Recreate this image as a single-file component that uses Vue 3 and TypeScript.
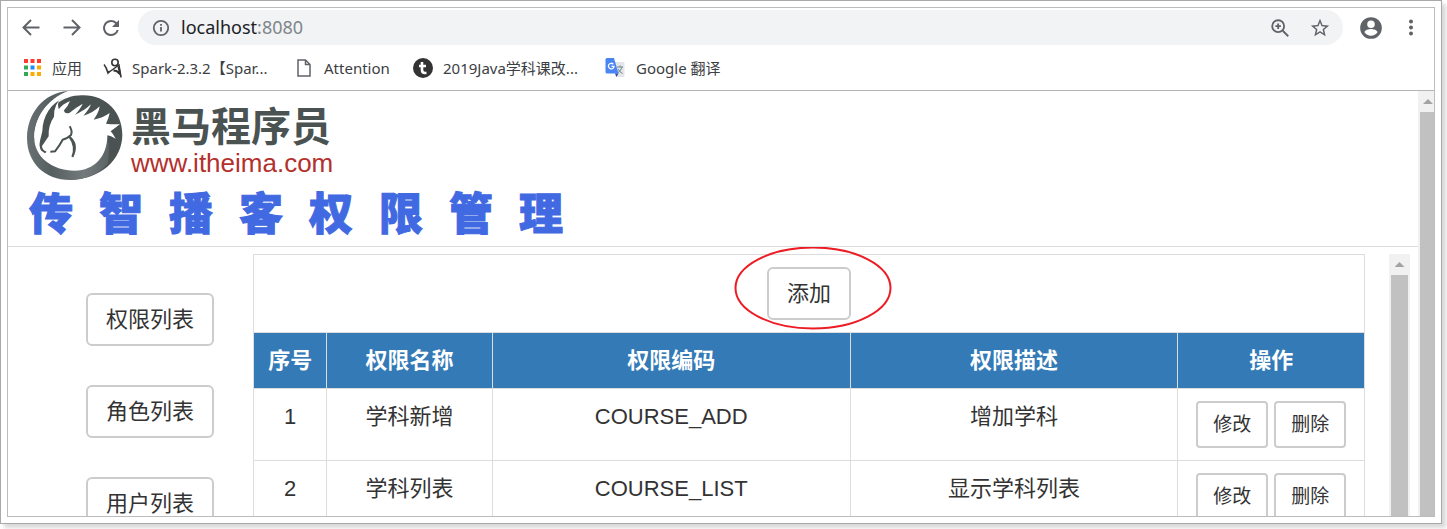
<script setup lang="ts">
interface Permission {
  id: number
  name: string
  code: string
  description: string
}

const title: string[] = [...'传智播客权限管理']
const menu: string[] = ['权限列表', '角色列表', '用户列表']
const headings: string[] = ['序号', '权限名称', '权限编码', '权限描述', '操作']
const permissions: Permission[] = [
  { id: 1, name: '学科新增', code: 'COURSE_ADD', description: '增加学科' },
  { id: 2, name: '学科列表', code: 'COURSE_LIST', description: '显示学科列表' },
]
const appColors: string[] = [
  '#ff3b30', '#ff3b30', '#ff3b30',
  '#34a853', '#1a8cff', '#fbab05',
  '#34a853', '#fbab05', '#fbab05',
]
</script>

<template>
  <div class="page">
    <div class="frame">
      <div class="browser">
        <header class="toolbar">
          <div class="nav-buttons">
            <button class="icon-button" aria-label="Back">
              <svg viewBox="0 0 24 24" width="24" height="24"><path d="M20.500 11.500H5M12 4l-7.500 7.500L12 19" class="line" /></svg>
            </button>
            <button class="icon-button" aria-label="Forward">
              <svg viewBox="0 0 24 24" width="24" height="24"><path d="M4.500 11.500H20M13 4l7.500 7.500L13 19" class="line" /></svg>
            </button>
            <button class="icon-button" aria-label="Reload">
              <svg viewBox="0 0 24 24" width="24" height="24" fill="#5f6368"><path d="M17.650 6.350A7.960 7.960 0 0 0 12 4a8 8 0 1 0 7.730 10h-2.080A6 6 0 1 1 12 6c1.660 0 3.140.69 4.220 1.780L13 11h7V4z" /></svg>
            </button>
          </div>
          <div class="address">
            <svg viewBox="0 0 20 20" width="18" height="18"><circle cx="10" cy="10" r="8" class="line" /><path d="M10 9v5M10 5.500v2" class="line" /></svg>
            <a class="url" href="#">localhost<span>:8080</span></a>
            <button class="icon-button" aria-label="Zoom">
              <svg viewBox="0 0 24 24" width="22" height="22"><circle cx="10" cy="10" r="6.500" class="line" /><path d="m15 15 6 6M10 7v6M7 10h6" class="line" /></svg>
            </button>
            <button class="icon-button star" aria-label="Bookmark">
              <svg viewBox="0 0 24 24" width="22" height="22" fill="#5f6368"><path d="m22 9.240-7.190-.62L12 2 9.190 8.630 2 9.240l5.460 4.730L5.820 21 12 17.270 18.180 21l-1.630-7.030zM12 15.400l-3.760 2.270 1-4.280-3.320-2.880 4.380-.38L12 6.100l1.710 4.040 4.380.38-3.320 2.880 1 4.280z" /></svg>
            </button>
          </div>
          <div class="menu-buttons">
            <button class="icon-button" aria-label="Account">
              <svg viewBox="0 0 24 24" width="26" height="26" fill="#5f6368"><path d="M12 2a10 10 0 1 0 0 20 10 10 0 0 0 0-20zm0 3a3.500 3.500 0 1 1 0 7 3.500 3.500 0 0 1 0-7zm0 14.200a7.200 7.200 0 0 1-6-3.220c.03-1.990 4-3.080 6-3.080s5.970 1.090 6 3.080a7.200 7.200 0 0 1-6 3.220z" /></svg>
            </button>
            <button class="icon-button" aria-label="Menu">
              <svg viewBox="0 0 24 24" width="24" height="24" fill="#5f6368"><circle cx="12" cy="5.500" r="2" /><circle cx="12" cy="11.500" r="2" /><circle cx="12" cy="17.500" r="2" /></svg>
            </button>
          </div>
        </header>

        <nav class="bookmarks">
          <a href="#" class="mark apps">
            <svg viewBox="0 0 17 17" width="17" height="17">
              <rect v-for="(color, i) in appColors" :key="i" :x="(i % 3) * 6.500" :y="Math.floor(i / 3) * 6.500" width="4" height="4" :fill="color" />
            </svg>
            <span>应用</span>
          </a>
          <a href="#" class="mark spark">
            <svg viewBox="0 0 20 20" width="20" height="20" fill="none" stroke="#333">
              <circle cx="12" cy="4.500" r="3.200" stroke-width="1.600" />
              <path d="M1 6.500q2.500 3 4 8.500l1.500-2" stroke-width="1.500" />
              <path d="M5.500 14.500 16 7l2 12.500" stroke-width="1.500" />
              <path d="M15.500 8.500 17 16l-3.500-3-3-.5" stroke-width="2" />
            </svg>
            <span>Spark-2.3.2【Spar...</span>
          </a>
          <a href="#" class="mark attention">
            <svg viewBox="0 0 14 18" width="14" height="18" fill="none" stroke="#5f6368" stroke-width="1.500"><path d="M1 1h7.500L13 5.500V17H1zM8.500 1v4.500H13" /></svg>
            <span>Attention</span>
          </a>
          <a href="#" class="mark course">
            <svg viewBox="0 0 20 20" width="20" height="20"><circle cx="10" cy="10" r="10" fill="#333" /><path d="M9 4v8q0 3 3 3h1.500M6 8h7" fill="none" stroke="#fff" stroke-width="2.600" /></svg>
            <span>2019Java学科课改...</span>
          </a>
          <a href="#" class="mark translate">
            <svg viewBox="0 0 20 20" width="20" height="20">
              <path d="M7 4h11q1.500 0 1.500 1.500v12q0 1.500-1.500 1.500h-7z" fill="#e3e5e8" />
              <path d="M12 9h6M15 7.500V9M17 9q-1 4-4.500 6M13 11q1.500 3 4.500 4.500" fill="none" stroke="#6f8790" />
              <path d="M2 0h7l4.500 15.500H2Q.5 15.500.5 14V1.500Q.5 0 2 0z" fill="#4a86f3" />
              <path d="M10 15.500h3.500L11.500 19z" fill="#3949ab" />
              <path d="M8.300 6.200A2.800 2.800 0 1 0 9 8.400H6.500" fill="none" stroke="#fff" stroke-width="1.300" />
            </svg>
            <span>Google 翻译</span>
          </a>
        </nav>

        <div class="viewport">
          <main class="site">
            <div class="banner">
              <div class="logo">
                <svg viewBox="21 9 288 270" width="96" height="90">
                  <defs>
                    <linearGradient id="rim" x1="0" y1="0" x2="1" y2="0">
                      <stop offset="0" stop-color="#687073" />
                      <stop offset=".3" stop-color="#565f60" />
                      <stop offset=".7" stop-color="#747a7c" />
                      <stop offset="1" stop-color="#5c6466" />
                    </linearGradient>
                  </defs>
                  <path d="M190 22C260 22 307 75 307 140C307 215 240 275 150 275C110 260 70 200 68 130C72 60 130 20 190 22Z" fill="#4a5352" />
                  <path d="M144 9C70 14 21 78 21 150C21 225 75 276 150 276C195 276 236 258 263 228C268 205 268 175 262 145L240 200L165 249L43 150C43 90 80 35 144 9Z" fill="url(#rim)" />
                  <path d="M144 10C80 35 43 90 43 150C43 205 95 248 165 248C222 248 262 207 262 142Q272 143 287 152Q279 137 272 130Q288 118 300 108Q280 110 258 107Q266 92 269 75Q248 90 221 95Q236 75 239 55Q218 76 190 83Q207 65 213 49Q190 70 165 80Q182 62 188 47Q164 61 148 75Q133 79 132 67Q144 55 150 39Q128 48 116 64Q112 52 116 36Q120 22 144 10Z" fill="#fff" />
                  <path d="M132 30C92 46 68 84 67 130L60 158Q56 177 64 188L75 196L80 191Q66 186 66 174L86 145Q84 112 102 86L103 68Q108 48 118 36Z" fill="#4a5352" />
                  <path d="M149 115Q158 130 153 141Q143 151 128 155Q118 174 105 190L91 191M148 146Q176 168 157 207Q170 175 148 146" fill="none" stroke="#4a5352" stroke-width="6" />
                </svg>
                <div class="logo-text">
                  <strong>黑马程序员</strong>
                  <span>www.itheima.com</span>
                </div>
              </div>
              <h1><span v-for="(char, i) in title" :key="i">{{ char }}</span></h1>
            </div>
            <div class="content">
              <aside>
                <button v-for="item in menu" :key="item" class="btn">{{ item }}</button>
              </aside>
              <section class="panel">
                <table>
                  <colgroup>
                    <col class="c-id"><col class="c-name"><col class="c-code"><col class="c-desc"><col class="c-ops">
                  </colgroup>
                  <tbody>
                    <tr>
                      <td colspan="5">
                        <div class="add-wrap">
                          <button class="btn">添加</button>
                          <svg class="callout" viewBox="0 0 158 84" width="158" height="84"><ellipse cx="79" cy="42" rx="77.500" ry="40.500" fill="none" stroke="#ed1c24" stroke-width="2" /></svg>
                        </div>
                      </td>
                    </tr>
                    <tr>
                      <th v-for="heading in headings" :key="heading" scope="col">{{ heading }}</th>
                    </tr>
                    <tr v-for="row in permissions" :key="row.id">
                      <td>{{ row.id }}</td>
                      <td>{{ row.name }}</td>
                      <td>{{ row.code }}</td>
                      <td>{{ row.description }}</td>
                      <td>
                        <div class="ops">
                          <button class="btn small">修改</button>
                          <button class="btn small">删除</button>
                        </div>
                      </td>
                    </tr>
                  </tbody>
                </table>
              </section>
              <div class="scroll inner"><i class="arrow"></i><i class="thumb"></i></div>
            </div>
          </main>
          <div class="scroll outer"><i class="arrow"></i><i class="thumb"></i></div>
        </div>
      </div>
    </div>
  </div>
</template>

<style>
html, body {
  margin: 0;
  background: #fff;
}
</style>

<style scoped>
.page, .page * {
  box-sizing: border-box;
}
.page {
  height: 100vh;
  padding: 0 5px 5px 0;
  overflow: hidden;
  color: #333;
  font-family: "Liberation Sans", "Noto Sans CJK SC", sans-serif;
}
.frame {
  height: 100%;
  padding: 6px;
  border: 1px solid #a9a9a9;
  box-shadow: 4px 4px 4px #d9d9d9;
  background: #fff;
}
.browser {
  display: flex;
  flex-direction: column;
  height: 100%;
  border: 1px solid #bcbcbc;
  overflow: hidden;
}
button {
  font: inherit;
  color: inherit;
  cursor: pointer;
}
a {
  color: inherit;
  text-decoration: none;
}
svg {
  display: block;
  flex: none;
}
.line {
  fill: none;
  stroke: #5f6368;
  stroke-width: 2;
}
.toolbar {
  display: flex;
  flex: none;
  align-items: center;
  gap: 15px;
  height: 39px;
  padding: 0 11px;
}
.nav-buttons,
.menu-buttons {
  display: flex;
  align-items: center;
  gap: 16px;
}
.menu-buttons {
  gap: 15px;
}
.icon-button {
  display: flex;
  padding: 0;
  border: 0;
  background: none;
}
.address {
  display: flex;
  flex: 1;
  align-items: center;
  height: 35px;
  padding: 0 12px 0 14px;
  border-radius: 18px;
  background: #f1f3f4;
}
.url {
  flex: 1;
  margin-left: 11px;
  color: #202124;
  font: 18px/35px "Noto Sans", sans-serif;
}
.url span {
  color: #80868b;
}
.star {
  margin-left: 18px;
}
.bookmarks {
  display: flex;
  flex: none;
  align-items: center;
  height: 44px;
  padding: 0 16px 2px;
  border-bottom: 1px solid #b5b5b5;
  color: #3c4043;
  font: 15px/20px "Noto Sans", "Noto Sans CJK SC", sans-serif;
  white-space: nowrap;
}
.mark {
  display: flex;
  align-items: center;
  gap: 11px;
}
.apps { width: 79px; }
.spark { width: 194px; gap: 9px; }
.attention { width: 116px; gap: 13px; }
.course { width: 192px; gap: 10px; }
.viewport {
  display: flex;
  flex: 1;
  min-height: 0;
}
.site {
  display: flex;
  flex: 1;
  flex-direction: column;
  min-width: 0;
}
.banner {
  flex: none;
  height: 156px;
  padding-left: 19px;
  border-bottom: 1px solid #ddd;
}
.logo {
  display: flex;
  gap: 8px;
  height: 90px;
}
.logo-text {
  display: flex;
  flex-direction: column;
  padding-top: 16px;
}
.logo-text strong {
  color: #4a5352;
  font-size: 40px;
  line-height: 41px;
}
.logo-text span {
  color: #b4302d;
  font-size: 26px;
  line-height: 30px;
}
h1 {
  display: flex;
  gap: 26px;
  margin: 0;
  padding-left: 2px;
  color: #4169e1;
  font: 900 44px/60px "Noto Sans CJK SC", sans-serif;
  -webkit-text-stroke: 1px #4169e1;
}
.content {
  display: flex;
  flex: 1;
  min-height: 0;
  padding: 7px 8px 0 0;
  overflow: hidden;
}
aside {
  display: flex;
  flex: none;
  flex-direction: column;
  align-items: flex-end;
  gap: 39px;
  width: 245px;
  padding: 39px 39px 0 0;
}
.btn {
  flex: none;
  padding: 0 18px;
  border: 2px solid #ccc;
  border-radius: 6px;
  background: #fff;
  font-size: 22px;
  line-height: 49px;
  white-space: nowrap;
}
.btn.small {
  padding: 0 15px;
  border-radius: 4px;
  font-size: 19px;
  line-height: 43px;
}
.panel {
  flex: 1;
  min-width: 0;
  margin-right: 24px;
}
table {
  width: 100%;
  border-collapse: collapse;
  table-layout: fixed;
  font-size: 22px;
  line-height: 31px;
  text-align: center;
}
.c-id { width: 6.6%; }
.c-name { width: 14.9%; }
.c-code { width: 32.2%; }
.c-desc { width: 29.5%; }
.c-ops { width: 16.8%; }
td, th {
  padding: 12px 0;
  border: 1px solid #ddd;
  vertical-align: top;
}
th {
  background: #337ab7;
  color: #fff;
}
.add-wrap {
  display: flex;
  position: relative;
  justify-content: center;
}
.callout {
  position: absolute;
  top: -21px;
  left: calc(50% - 75px);
  pointer-events: none;
}
.ops {
  display: flex;
  justify-content: center;
  gap: 6px;
}
.scroll {
  display: flex;
  flex: none;
  flex-direction: column;
  align-items: center;
  background: #f1f1f1;
}
.inner { width: 21px; }
.outer { width: 16px; }
.arrow {
  width: 10px;
  height: 5px;
  margin: 8px 0;
  background: #a3a3a3;
  clip-path: polygon(50% 0, 100% 100%, 0 100%);
}
.thumb {
  flex: 1;
  align-self: stretch;
  margin: 0 2px;
  background: #c1c1c1;
}
.outer .arrow {
  margin-left: 4px;
}
.outer .thumb {
  margin-right: 0;
}
</style>
